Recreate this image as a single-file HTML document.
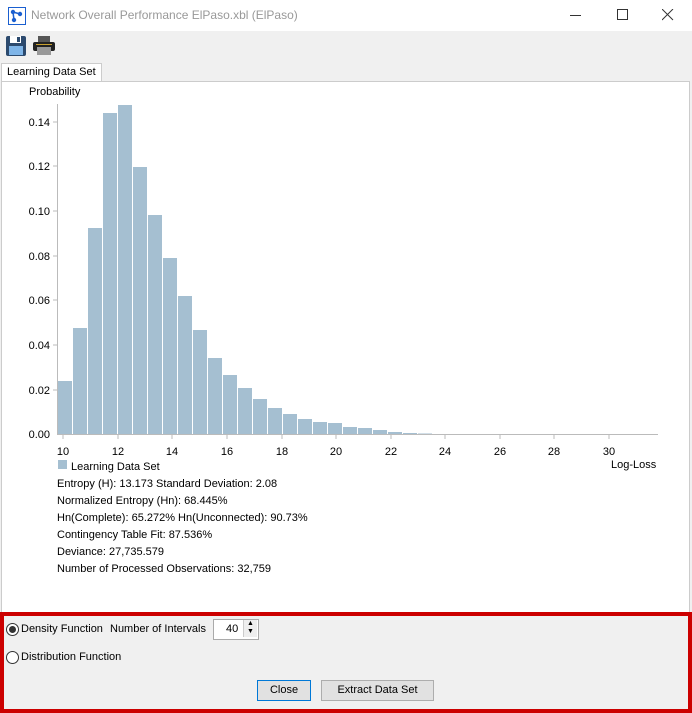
<!DOCTYPE html>
<html><head><style>
body{margin:0;width:692px;height:713px;overflow:hidden;background:#f0f0f0;font-family:"Liberation Sans",sans-serif;font-size:11px;color:#000;position:relative}
.a{position:absolute}
</style></head><body>
<div class="a" style="left:0;top:0;width:692px;height:31px;background:#fff"></div>
<div class="a" style="left:8px;top:7px;width:16px;height:16px;border:1px solid #1a5fd0;background:#fff"></div>
<svg class="a" style="left:9px;top:8px" width="16" height="16"><path d="M4 4 L11 6 M4 4 L5 12" stroke="#1a5fd0" stroke-width="1.5"/><circle cx="4" cy="4" r="2.2" fill="#1a5fd0"/><circle cx="11" cy="6" r="2.2" fill="#1a5fd0"/><circle cx="5" cy="12" r="2.2" fill="#1a5fd0"/></svg>
<div class="a" style="left:31px;top:8px;font-size:12px;color:#999">Network Overall Performance ElPaso.xbl (ElPaso)</div>
<div class="a" style="left:570px;top:15px;width:11px;height:1px;background:#333"></div>
<div class="a" style="left:617px;top:9px;width:9px;height:9px;border:1px solid #333"></div>
<svg class="a" style="left:662px;top:9px" width="12" height="12"><path d="M0 0L11 11M11 0L0 11" stroke="#333"/></svg>
<svg class="a" style="left:5px;top:35px" width="22" height="22"><rect x="1" y="1" width="20" height="20" rx="2" fill="#2c4a6e"/><rect x="5" y="1" width="11" height="7" fill="#fff"/><rect x="12" y="2" width="3" height="5" fill="#2c4a6e"/><rect x="4" y="11" width="14" height="9" fill="#7fb5e8"/></svg>
<svg class="a" style="left:33px;top:36px" width="22" height="20"><rect x="5" y="0" width="12" height="6" fill="#555"/><rect x="0" y="6" width="22" height="9" rx="2" fill="#222"/><rect x="4" y="11" width="14" height="8" fill="#999"/><rect x="3" y="8" width="16" height="1" fill="#c8a030"/></svg>
<div class="a" style="left:1px;top:63px;width:99px;height:19px;background:#fff;border:1px solid #ccc;border-bottom:none"></div>
<div class="a" style="left:7px;top:66px">Learning Data Set</div>
<div class="a" style="left:1px;top:81px;width:687px;height:531px;background:#fff;border:1px solid #ccc"></div>
<div class="a" style="left:29px;top:86px">Probability</div>
<svg class="a" style="left:0;top:0" width="692" height="612" font-family="Liberation Sans" font-size="11">
<g fill="#a5bfd1" id="bars"></g>
<line x1="57.5" y1="104" x2="57.5" y2="435" stroke="#bbb"/>
<line x1="57" y1="434.5" x2="658" y2="434.5" stroke="#bbb"/>
<g fill="#000" text-anchor="end">
<text x="50" y="126">0.14</text><text x="50" y="170">0.12</text><text x="50" y="215">0.10</text><text x="50" y="260">0.08</text><text x="50" y="304">0.06</text><text x="50" y="349">0.04</text><text x="50" y="394">0.02</text><text x="50" y="438">0.00</text>
</g>
<g stroke="#bbb"><line x1="53" x2="57" y1="122" y2="122"/><line x1="53" x2="57" y1="166" y2="166"/><line x1="53" x2="57" y1="211" y2="211"/><line x1="53" x2="57" y1="256" y2="256"/><line x1="53" x2="57" y1="300" y2="300"/><line x1="53" x2="57" y1="345" y2="345"/><line x1="53" x2="57" y1="390" y2="390"/></g>
<g fill="#000" text-anchor="middle">
<text x="63" y="455">10</text><text x="118" y="455">12</text><text x="172" y="455">14</text><text x="227" y="455">16</text><text x="282" y="455">18</text><text x="336" y="455">20</text><text x="391" y="455">22</text><text x="445" y="455">24</text><text x="500" y="455">26</text><text x="554" y="455">28</text><text x="609" y="455">30</text>
</g>
<g stroke="#bbb"><line x1="63" x2="63" y1="435" y2="439"/><line x1="118" x2="118" y1="435" y2="439"/><line x1="172" x2="172" y1="435" y2="439"/><line x1="227" x2="227" y1="435" y2="439"/><line x1="282" x2="282" y1="435" y2="439"/><line x1="336" x2="336" y1="435" y2="439"/><line x1="391" x2="391" y1="435" y2="439"/><line x1="445" x2="445" y1="435" y2="439"/><line x1="500" x2="500" y1="435" y2="439"/><line x1="554" x2="554" y1="435" y2="439"/><line x1="609" x2="609" y1="435" y2="439"/></g>
<text x="611" y="468">Log-Loss</text>
<rect x="58" y="460" width="9" height="9" fill="#a5bfd1"/>
<text x="71" y="470">Learning Data Set</text>
<text x="57" y="487">Entropy (H): 13.173 Standard Deviation: 2.08</text>
<text x="57" y="504">Normalized Entropy (Hn): 68.445%</text>
<text x="57" y="521">Hn(Complete): 65.272% Hn(Unconnected): 90.73%</text>
<text x="57" y="538">Contingency Table Fit: 87.536%</text>
<text x="57" y="555">Deviance: 27,735.579</text>
<text x="57" y="572">Number of Processed Observations: 32,759</text>
</svg>
<script>
var t=[381,328,228,113,105,167,215,258,296,330,358,375,388,399,408,414,419,422,423,427,428,430,432,433,433.5,434,434,434];
var g=document.getElementById('bars'),s='';
t.forEach(function(y,i){s+='<rect x="'+(58+15*i)+'" y="'+y+'" width="14" height="'+(434-y)+'"/>';});
g.innerHTML=s;
</script>
<div class="a" style="left:0;top:612px;width:684px;height:93px;border:4px solid #cc0000"></div>
<div class="a" style="left:6px;top:623px;width:11px;height:11px;border:1px solid #333;border-radius:50%;background:#fff"></div>
<div class="a" style="left:9px;top:626px;width:7px;height:7px;border-radius:50%;background:#333"></div>
<div class="a" style="left:21px;top:623px">Density Function</div>
<div class="a" style="left:110px;top:623px">Number of Intervals</div>
<div class="a" style="left:213px;top:619px;width:44px;height:19px;border:1px solid #aaa;background:#fff"></div>
<div class="a" style="left:226px;top:623px">40</div>
<div class="a" style="left:243px;top:620px;width:13px;height:17px;background:#eee;border-left:1px solid #ccc;font-size:7px;line-height:8px;text-align:center">▲<br>▼</div>
<div class="a" style="left:6px;top:651px;width:11px;height:11px;border:1px solid #333;border-radius:50%;background:#fff"></div>
<div class="a" style="left:21px;top:651px">Distribution Function</div>
<div class="a" style="left:257px;top:680px;width:52px;height:19px;border:1px solid #0078d7;background:#e1e1e1;text-align:center;line-height:19px">Close</div>
<div class="a" style="left:321px;top:680px;width:111px;height:19px;border:1px solid #adadad;background:#e1e1e1;text-align:center;line-height:19px">Extract Data Set</div>
</body></html>
